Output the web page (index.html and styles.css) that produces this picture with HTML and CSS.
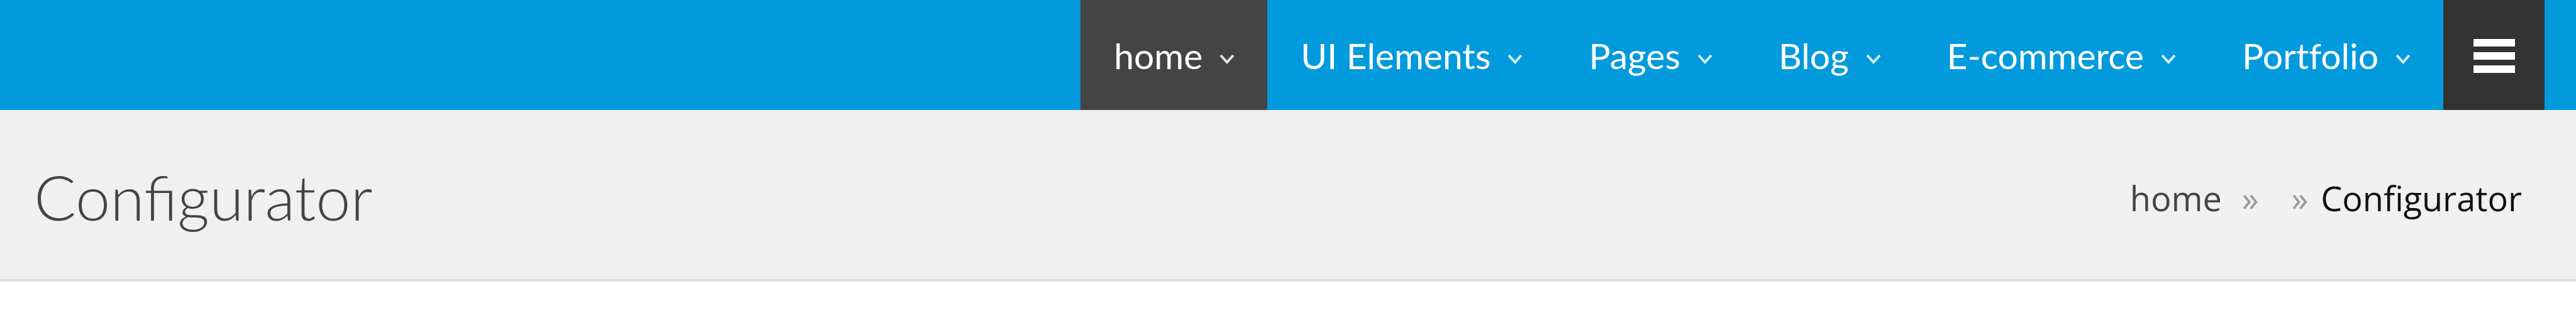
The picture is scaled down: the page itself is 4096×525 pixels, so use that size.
FILE: index.html
```html
<!DOCTYPE html>
<html lang="en">
<head>
<meta charset="utf-8">
<title>Configurator</title>
<link rel="stylesheet" href="styles.css">
</head>
<body>
<header class="topbar">
  <nav class="nav" aria-label="Main">
    <a class="nav-item active" href="#">home<svg class="chevron" viewBox="0 0 22 14" aria-hidden="true"><path d="M1 1l10 11L21 1"/></svg></a>
    <a class="nav-item" href="#">UI Elements<svg class="chevron" viewBox="0 0 22 14" aria-hidden="true"><path d="M1 1l10 11L21 1"/></svg></a>
    <a class="nav-item" href="#">Pages<svg class="chevron" viewBox="0 0 22 14" aria-hidden="true"><path d="M1 1l10 11L21 1"/></svg></a>
    <a class="nav-item" href="#">Blog<svg class="chevron" viewBox="0 0 22 14" aria-hidden="true"><path d="M1 1l10 11L21 1"/></svg></a>
    <a class="nav-item" href="#">E-commerce<svg class="chevron" viewBox="0 0 22 14" aria-hidden="true"><path d="M1 1l10 11L21 1"/></svg></a>
    <a class="nav-item" href="#">Portfolio<svg class="chevron" viewBox="0 0 22 14" aria-hidden="true"><path d="M1 1l10 11L21 1"/></svg></a>
  </nav>
  <button class="menu-button" type="button" aria-label="Menu">
    <svg class="menu-icon" viewBox="0 0 66 54" aria-hidden="true"><path d="M0 0h66v12H0zM0 21h66v12H0zM0 42h66v12H0z"/></svg>
  </button>
</header>
<section class="page-head">
  <h1 class="page-title">Configurator</h1>
  <nav class="crumbs" aria-label="Breadcrumb">
    <a class="crumb-link" href="#">home</a>
    <span class="crumb-sep">»</span>
    <span class="crumb-sep crumb-sep-last">»</span>
    <span class="crumb-current" aria-current="page">Configurator</span>
  </nav>
</section>
</body>
</html>
```
FILE: styles.css
```css
* { box-sizing: border-box; }
body { margin: 0; background: #fff; font-family: Lato, sans-serif; }
.topbar { display: flex; justify-content: flex-end; min-height: 175px; padding-right: 50px; background: #009add; }
.nav { display: flex; }
.nav-item { display: flex; align-items: center; gap: 28px; padding: 0 53px; color: #fff; font-size: 57px; font-variant-ligatures: none; line-height: 64px; text-decoration: none; }
.nav-item.active { background: #444; }
.chevron { width: 22px; height: 14px; margin-top: 12px; overflow: visible; fill: none; stroke: currentColor; stroke-width: 4; opacity: 0.85; }
.menu-button { display: flex; align-items: center; justify-content: center; width: 161px; padding: 3px 0 0; border: 0; background: #333; }
.menu-icon { width: 66px; height: 54px; fill: #fff; }
.page-head { display: flex; align-items: center; justify-content: space-between; min-height: 273px; padding: 6px 86px 0 54px; border-bottom: 4px solid #e0e0e0; background: #f0f0f0; }
.page-title { margin: 0; color: #444; font-size: 99px; font-weight: 300; line-height: 120px; }
.crumbs { display: flex; align-items: center; padding-top: 4px; font-family: "Open Sans", sans-serif; font-size: 54px; line-height: 72px; }
.crumb-link { margin-right: 32px; color: #444; text-decoration: none; }
.crumb-sep { margin-right: 52px; color: #999; }
.crumb-sep-last { margin-right: 20px; }
.crumb-current { color: #111; }
```
